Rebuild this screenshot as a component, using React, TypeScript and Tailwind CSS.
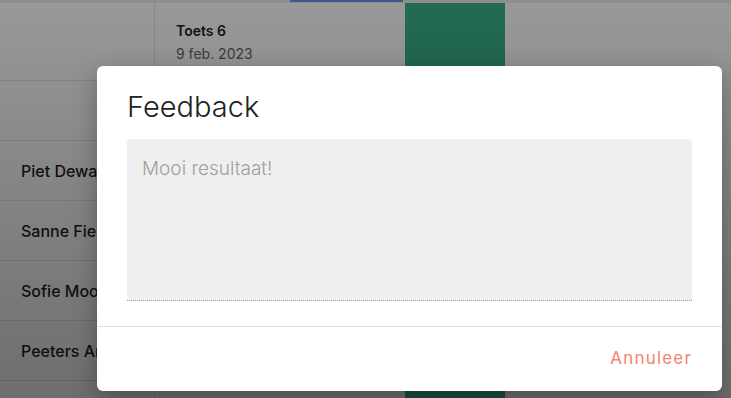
import React from "react";

const students = ["Piet Dewaele", "Sanne Fiers", "Sofie Mooren", "Peeters Anke", ""];

export default function App() {
    return (
        <div className="relative h-[398px] w-[731px] overflow-hidden bg-white font-['Inter','Lato',sans-serif]">
            {/* underlying grade table */}
            <div className="h-[3px] bg-[#ececec] pl-[290px]">
                <div className="h-[2px] w-[113px] bg-[#6a8ef0]" />
            </div>
            <div className="flex">
                <div className="w-[155px] border-r border-[#e2e2e2]">
                    <div className="h-[78px] border-b border-[#e2e2e2]" />
                    <div className="h-[60px] border-b border-[#e2e2e2]" />
                    {students.map((name, i) => (
                        <div
                            key={i}
                            className="flex h-[60px] items-center border-b border-[#e2e2e2] pl-[21px] text-[16px] font-medium whitespace-nowrap text-[#1f1f1f]"
                        >
                            {name}
                        </div>
                    ))}
                </div>
                <div className="w-[250px]">
                    <div className="pt-[18px] pl-[21px]">
                        <div className="text-[14px] leading-[20px] font-semibold text-[#1c1c1c]">Toets 6</div>
                        <div className="mt-[3px] text-[14px] leading-[20px] text-[#666]">9 feb. 2023</div>
                    </div>
                </div>
                <div className="h-[400px] w-[100px] bg-[#39b28a]" />
            </div>

            {/* dim overlay */}
            <div className="absolute inset-0 bg-gradient-to-b from-black/40 to-black/[0.57]" />

            {/* dialog */}
            <div className="absolute top-[66px] left-[97px] flex h-[325px] w-[625px] flex-col rounded-md bg-white shadow-[0_8px_24px_rgba(0,0,0,0.3)]">
                <div className="px-[30px] pt-[21px]">
                    <h2 className="text-[29px] leading-[40px] font-light text-[#222]">Feedback</h2>
                    <div className="mt-[12px] h-[162px] rounded-t bg-[#efefef] border-b border-dotted border-[#9a9a9a] px-[15px] pt-[18px]">
                        <div className="text-[19px] leading-[24px] font-light text-[#a0a0a0]">Mooi resultaat!</div>
                    </div>
                </div>
                <div className="mt-[25px] flex flex-1 items-center justify-end border-t border-[#e0e0e0] px-[30px]">
                    <button className="text-[17px] tracking-[0.07em] text-[#f4836f]">Annuleer</button>
                </div>
            </div>
        </div>
    );
}
